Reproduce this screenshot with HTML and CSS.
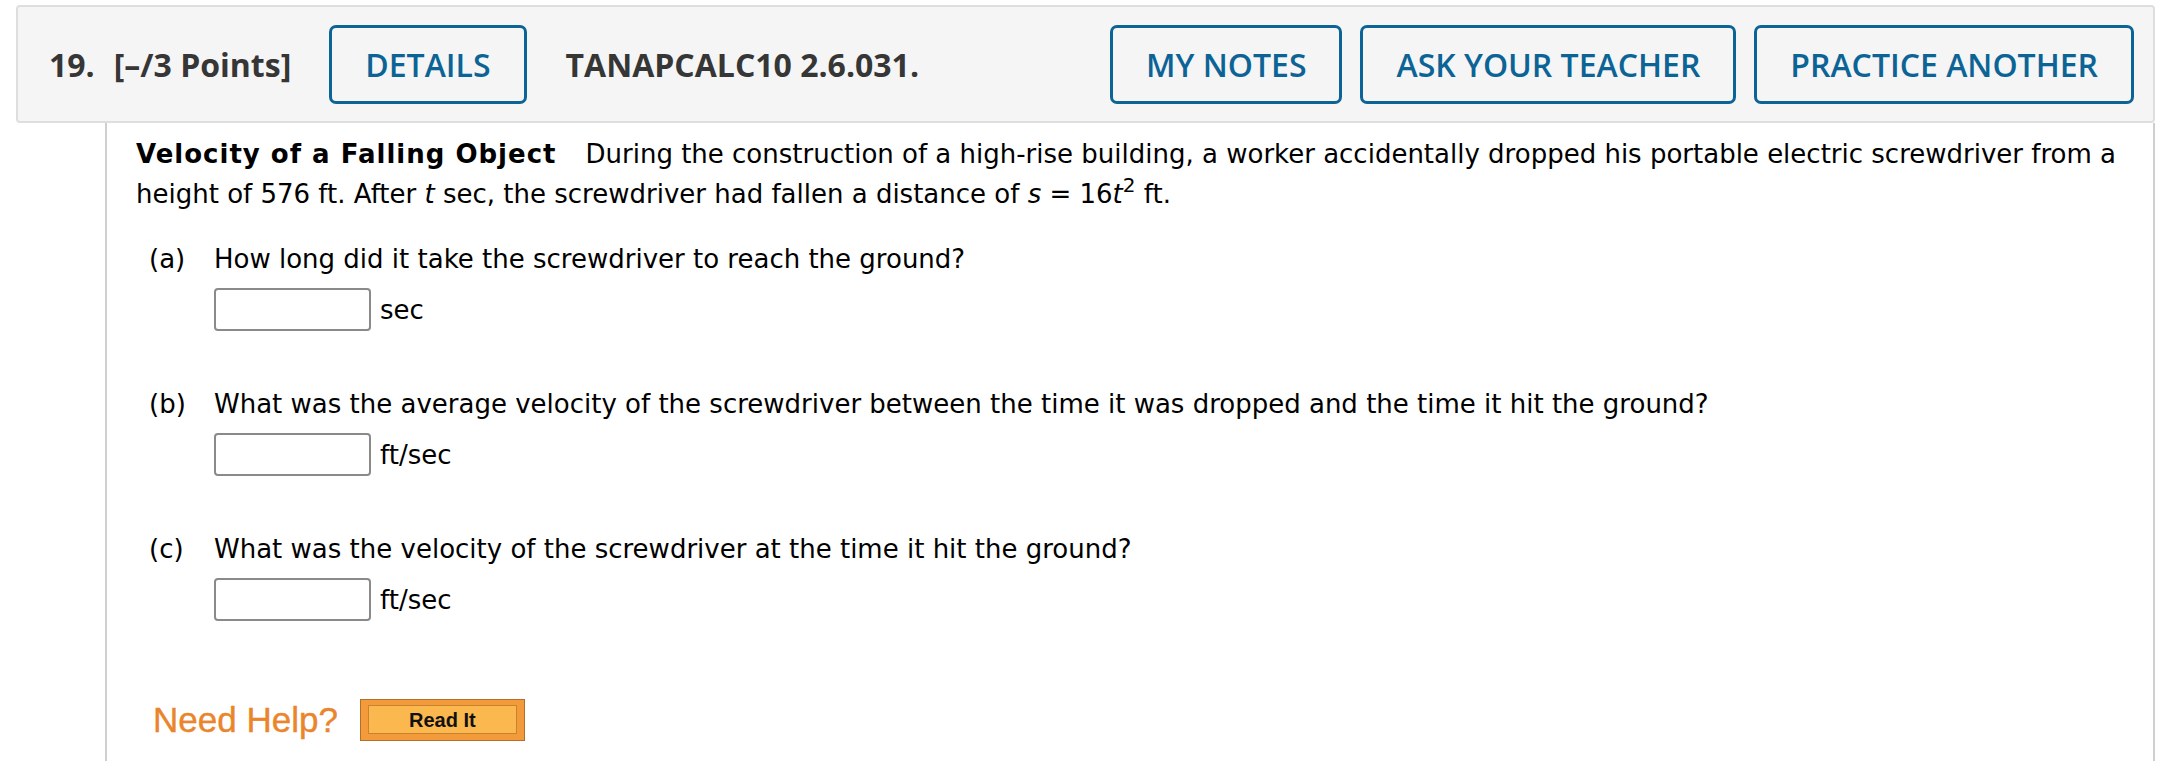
FILE: index.html
```html
<!DOCTYPE html>
<html lang="en">
<head>
<meta charset="utf-8">
<title>Question 19</title>
<link rel="stylesheet" href="styles.css">
</head>
<body>
<div class="question">
  <div class="q-header">
    <span class="q-num">19.</span>
    <span class="q-points">[–/3 Points]</span>
    <button class="hbtn">DETAILS</button>
    <span class="q-code">TANAPCALC10 2.6.031.</span>
    <div class="hbtn-group">
      <button class="hbtn">MY NOTES</button>
      <button class="hbtn">ASK YOUR TEACHER</button>
      <button class="hbtn">PRACTICE ANOTHER</button>
    </div>
  </div>
  <div class="q-body">
    <p class="intro"><b class="title">Velocity of a Falling Object</b>During the construction of a high-rise building, a worker accidentally dropped his portable electric screwdriver from a height of 576 ft. After <i>t</i> sec, the screwdriver had fallen a distance of <i>s</i> = 16<i>t</i><sup>2</sup> ft.</p>

    <div class="part">
      <span class="part-label">(a)</span>
      <div class="part-main">
        <div class="part-q">How long did it take the screwdriver to reach the ground?</div>
        <div class="answer"><input class="ans-input" type="text"><span class="unit">sec</span></div>
      </div>
    </div>

    <div class="part">
      <span class="part-label">(b)</span>
      <div class="part-main">
        <div class="part-q">What was the average velocity of the screwdriver between the time it was dropped and the time it hit the ground?</div>
        <div class="answer"><input class="ans-input" type="text"><span class="unit">ft/sec</span></div>
      </div>
    </div>

    <div class="part">
      <span class="part-label">(c)</span>
      <div class="part-main">
        <div class="part-q">What was the velocity of the screwdriver at the time it hit the ground?</div>
        <div class="answer"><input class="ans-input" type="text"><span class="unit">ft/sec</span></div>
      </div>
    </div>

    <div class="help">
      <span class="need-help">Need Help?</span>
      <span class="read-it"><span class="read-it-inner">Read It</span></span>
    </div>
  </div>
</div>
</body>
</html>
```

FILE: styles.css
```css
html, body {
  margin: 0;
  padding: 0;
  background: #fff;
}

.question {
  padding: 5px 3px 0 16px;
}

.q-header {
  display: flex;
  align-items: center;
  height: 114px;
  padding: 0 19px 0 31px;
  background: #f5f5f5;
  border: 2px solid #dedede;
  border-radius: 4px;
  font-family: "Open Sans", "Liberation Sans", sans-serif;
  color: #363636;
}

.q-num {
  font-size: 32px;
  font-weight: 700;
  margin-right: 19px;
}

.q-points {
  font-size: 32px;
  font-weight: 700;
  margin-right: 38px;
}

.q-code {
  font-size: 32px;
  font-weight: 700;
  margin-left: 39px;
}

.hbtn-group {
  display: flex;
  gap: 18px;
  margin-left: auto;
}

.hbtn {
  height: 79px;
  padding: 0 33px;
  background: transparent;
  border: 3px solid #0c6496;
  border-radius: 7px;
  color: #0c6496;
  font-family: "Open Sans", "Liberation Sans", sans-serif;
  font-size: 32px;
  font-weight: 600;
}

.q-body {
  margin-left: 89px;
  min-height: 627px;
  border-left: 2px solid #cfcfcf;
  border-right: 2px solid #cfcfcf;
  padding: 11px 20px 0 29px;
  font-family: Verdana, "DejaVu Sans", sans-serif;
  font-size: 26px;
  line-height: 40px;
  color: #000;
}

.intro {
  margin: 0;
}

.title {
  letter-spacing: 1px;
  margin-right: 29px;
}

sup {
  font-size: 20px;
  line-height: 0;
  vertical-align: 11px;
}

.part {
  display: flex;
  padding-left: 13px;
  margin-top: 25px;
}

.part + .part {
  margin-top: 53px;
}

.part-label {
  width: 65px;
  flex: none;
}

.part-main {
  display: flex;
  flex-direction: column;
  gap: 9px;
}

.answer {
  display: flex;
  align-items: center;
  gap: 9px;
}

.ans-input {
  width: 157px;
  height: 43px;
  box-sizing: border-box;
  margin: 0;
  border: 2px solid #8a8a8a;
  border-radius: 4px;
  background: #fff;
}

.unit {
  line-height: 30px;
}

.help {
  display: flex;
  align-items: center;
  gap: 22px;
  margin-top: 78px;
  padding-left: 17px;
}

.need-help {
  font-family: "Liberation Sans", Arial, sans-serif;
  font-size: 35px;
  color: #ea852c;
  line-height: 40px;
  -webkit-text-stroke: 0.4px #ea852c;
}

.read-it {
  display: flex;
  width: 165px;
  height: 42px;
  box-sizing: border-box;
  padding: 5px 7px 6px 7px;
  background: #f39a3a;
  border: 1px solid #b26f2e;
}

.read-it-inner {
  flex: 1;
  display: flex;
  align-items: center;
  justify-content: center;
  background: #fbb84f;
  border: 1px solid #c9822f;
  font-family: "Liberation Sans", Arial, sans-serif;
  font-weight: 700;
  font-size: 20px;
  line-height: 1;
  color: #111;
}
```
